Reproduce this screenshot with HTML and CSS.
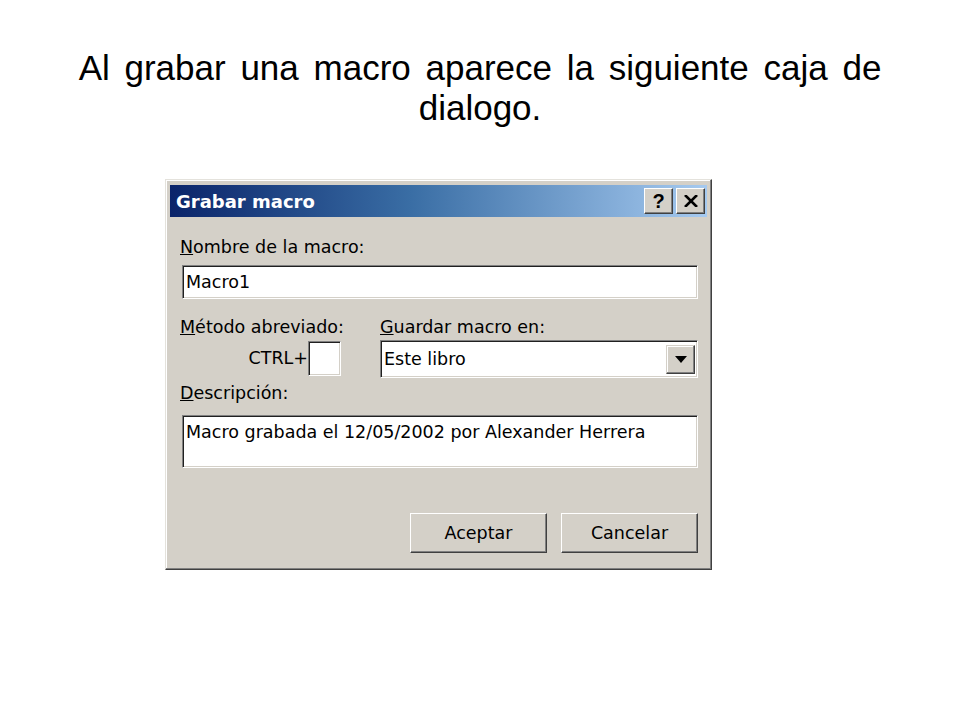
FILE: index.html
```html
<!DOCTYPE html>
<html lang="es">
<head>
    <meta charset="UTF-8">
    <title>Grabar macro</title>
    <link rel="stylesheet" href="styles.css">
</head>
<body>
	<h1 class="slideTitle">Al grabar una macro aparece la siguiente caja de dialogo.</h1>
	<div class="dialog">
		<div class="titleBar">
			<span class="titleText">Grabar macro</span>
			<div class="titleButtons">
				<span class="tbtn help">?</span>
				<span class="tbtn close">
					<svg width="14" height="12" viewBox="0 0 14 12"><path d="M1 0 L13 12 M13 0 L1 12" stroke="#000" stroke-width="2.6"/></svg>
				</span>
			</div>
		</div>
		<div class="content">
			<div class="label firstLabel"><u>N</u>ombre de la macro:</div>
			<div class="field nameField">Macro1</div>
			<div class="row">
				<div class="shortcut">
					<div class="label"><u>M</u>étodo abreviado:</div>
					<div class="ctrlLine">
						<span class="ctrlText">CTRL+</span>
						<span class="field keyField"></span>
					</div>
				</div>
				<div class="saveIn">
					<div class="label"><u>G</u>uardar macro en:</div>
					<div class="field combo">
						<span class="comboText">Este libro</span>
						<span class="comboBtn"><svg width="12" height="7" viewBox="0 0 12 7"><path d="M0 0 H12 L6 7 Z" fill="#000"/></svg></span>
					</div>
				</div>
			</div>
			<div class="label descLabel"><u>D</u>escripción:</div>
			<div class="field descField">Macro grabada el 12/05/2002 por Alexander Herrera</div>
			<div class="actions">
				<span class="btn">Aceptar</span>
				<span class="btn">Cancelar</span>
			</div>
		</div>
	</div>
</body>
</html>
```

FILE: styles.css
```css
body, html {
	margin: 0;
	padding: 0;
	background: #fff;
}
.slideTitle {
	margin: 0;
	padding: 48px 60px 0;
	font-family: "Liberation Sans", Arial, sans-serif;
	font-weight: 400;
	font-size: 35px;
	line-height: 40px;
	word-spacing: 5px;
	text-align: center;
	color: #000;
}
.dialog {
	width: 547px;
	height: 391px;
	margin: 51px 0 0 165px;
	box-sizing: border-box;
	padding: 5px 4px 4px;
	background: #d4d0c8;
	border: 1px solid;
	border-color: #e4e2dc #404040 #404040 #e4e2dc;
	box-shadow: inset -1px -1px 0 #808080, inset 1px 1px 0 #fff;
	font-family: "DejaVu Sans", sans-serif;
	font-size: 17.5px;
	color: #000;
}
.titleBar {
	height: 32px;
	display: flex;
	align-items: center;
	justify-content: space-between;
	padding: 0 2px 0 6px;
	background: linear-gradient(to right, #0a246a 0%, #3a6ea5 45%, #a6caf0 100%);
}
.titleText {
	color: #fff;
	font-weight: 700;
	font-size: 18px;
}
.titleButtons {
	display: flex;
	gap: 3px;
}
.tbtn {
	width: 29px;
	height: 26px;
	box-sizing: border-box;
	display: flex;
	align-items: center;
	justify-content: center;
	background: #d4d0c8;
	border: 1px solid;
	border-color: #fff #404040 #404040 #fff;
	box-shadow: inset -1px -1px 0 #808080;
	font-family: "Liberation Sans", Arial, sans-serif;
	font-weight: 700;
	font-size: 20px;
}
.content {
	padding: 0 9px 0 10px;
}
.label {
	line-height: 20px;
	height: 20px;
}
.firstLabel {
	margin-top: 20px;
}
.field {
	box-sizing: border-box;
	background: #fff;
	border: 1px solid;
	border-color: #808080 #fff #fff #808080;
	box-shadow: inset 1px 1px 0 #202020, inset -1px -1px 0 #d4d0c8;
}
.nameField {
	margin: 8px 0 0 2px;
	height: 34px;
	line-height: 32px;
	padding-left: 3px;
}
.row {
	display: flex;
	margin-top: 18px;
}
.shortcut {
	width: 200px;
}
.ctrlLine {
	display: flex;
	align-items: flex-start;
	justify-content: flex-end;
	padding-right: 39px;
	margin-top: 4px;
}
.ctrlText {
	line-height: 34px;
}
.keyField {
	width: 33px;
	height: 35px;
}
.saveIn {
	flex: 1;
}
.combo {
	margin-top: 3px;
	height: 38px;
	display: flex;
	align-items: center;
	justify-content: space-between;
	padding: 0 2px 0 3px;
}
.comboBtn {
	width: 29px;
	height: 29px;
	box-sizing: border-box;
	display: flex;
	align-items: center;
	justify-content: center;
	background: #d4d0c8;
	border: 1px solid;
	border-color: #d4d0c8 #404040 #404040 #d4d0c8;
	box-shadow: inset -1px -1px 0 #808080, inset 1px 1px 0 #fff;
}
.descLabel {
	margin-top: 5px;
}
.descField {
	margin: 12px 0 0 2px;
	height: 53px;
	padding: 4px 0 0 3px;
	line-height: 24px;
}
.actions {
	display: flex;
	justify-content: flex-end;
	gap: 14px;
	margin-top: 45px;
}
.btn {
	width: 137px;
	height: 40px;
	box-sizing: border-box;
	display: flex;
	align-items: center;
	justify-content: center;
	border: 1px solid;
	border-color: #fff #404040 #404040 #fff;
	box-shadow: inset -1px -1px 0 #808080;
}
```
